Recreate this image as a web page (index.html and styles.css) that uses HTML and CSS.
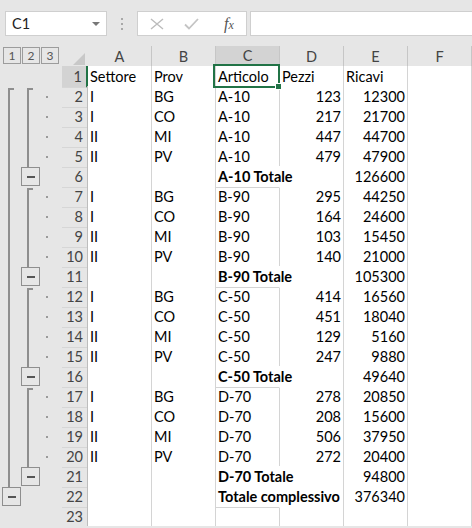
FILE: index.html
```html
<!DOCTYPE html>
<html lang="it">
<head>
  <meta charset="UTF-8">
  <title>Foglio1</title>
  <link rel="stylesheet" href="styles.css">
</head>
<body>

  <!-- barra della formula -->
  <div class="fbar">
    <div class="namebox"><span>C1</span><i class="caret"></i></div>
    <div class="grip"><i></i><i></i><i></i></div>
    <div class="fbtns">
      <svg class="btn-x" width="14" height="12" viewBox="0 0 14 12"><path d="M1 1L13 11M13 1L1 11" stroke="#bcbcbc" stroke-width="1.4" fill="none"/></svg>
      <svg class="btn-ok" width="15" height="12" viewBox="0 0 15 12"><path d="M1 6.5L5 10.5L14 1" stroke="#c4c4c4" stroke-width="1.8" fill="none"/></svg>
      <span class="fx">f<small>x</small></span>
    </div>
    <div class="finput"></div>
  </div>

  <!-- foglio -->
  <div class="sheet">
    <div class="row head">
      <div class="levels"><span>1</span><span>2</span><span>3</span></div>
      <div class="corner"><i></i></div>
      <div class="ch">A</div>
      <div class="ch">B</div>
      <div class="ch sel">C</div>
      <div class="ch">D</div>
      <div class="ch">E</div>
      <div class="ch">F</div>
    </div>

    <div class="row">
      <i class="o1"></i><i class="o2"></i><i class="od"></i>
      <div class="rh sel">1</div>
      <div class="c">Settore</div><div class="c">Prov</div><div class="c cur">Articolo</div><div class="c">Pezzi</div><div class="c">Ricavi</div><div class="c"></div>
    </div>

    <!-- A-10 -->
    <div class="row">
      <i class="o1 start"></i><i class="o2 start"></i><i class="od dot"></i>
      <div class="rh">2</div>
      <div class="c">I</div><div class="c">BG</div><div class="c">A-10</div><div class="c num">123</div><div class="c num">12300</div><div class="c"></div>
    </div>
    <div class="row">
      <i class="o1 line"></i><i class="o2 line"></i><i class="od dot"></i>
      <div class="rh">3</div>
      <div class="c">I</div><div class="c">CO</div><div class="c">A-10</div><div class="c num">217</div><div class="c num">21700</div><div class="c"></div>
    </div>
    <div class="row">
      <i class="o1 line"></i><i class="o2 line"></i><i class="od dot"></i>
      <div class="rh">4</div>
      <div class="c">II</div><div class="c">MI</div><div class="c">A-10</div><div class="c num">447</div><div class="c num">44700</div><div class="c"></div>
    </div>
    <div class="row">
      <i class="o1 line"></i><i class="o2 line"></i><i class="od dot"></i>
      <div class="rh">5</div>
      <div class="c">II</div><div class="c">PV</div><div class="c">A-10</div><div class="c num">479</div><div class="c num">47900</div><div class="c"></div>
    </div>
    <div class="row">
      <i class="o1 line"></i><i class="o2 box"></i><i class="od"></i>
      <div class="rh">6</div>
      <div class="c"></div><div class="c"></div><div class="c b spill">A-10 Totale</div><div class="c"></div><div class="c num">126600</div><div class="c"></div>
    </div>

    <!-- B-90 -->
    <div class="row">
      <i class="o1 line"></i><i class="o2 start"></i><i class="od dot"></i>
      <div class="rh">7</div>
      <div class="c">I</div><div class="c">BG</div><div class="c">B-90</div><div class="c num">295</div><div class="c num">44250</div><div class="c"></div>
    </div>
    <div class="row">
      <i class="o1 line"></i><i class="o2 line"></i><i class="od dot"></i>
      <div class="rh">8</div>
      <div class="c">I</div><div class="c">CO</div><div class="c">B-90</div><div class="c num">164</div><div class="c num">24600</div><div class="c"></div>
    </div>
    <div class="row">
      <i class="o1 line"></i><i class="o2 line"></i><i class="od dot"></i>
      <div class="rh">9</div>
      <div class="c">II</div><div class="c">MI</div><div class="c">B-90</div><div class="c num">103</div><div class="c num">15450</div><div class="c"></div>
    </div>
    <div class="row">
      <i class="o1 line"></i><i class="o2 line"></i><i class="od dot"></i>
      <div class="rh">10</div>
      <div class="c">II</div><div class="c">PV</div><div class="c">B-90</div><div class="c num">140</div><div class="c num">21000</div><div class="c"></div>
    </div>
    <div class="row">
      <i class="o1 line"></i><i class="o2 box"></i><i class="od"></i>
      <div class="rh">11</div>
      <div class="c"></div><div class="c"></div><div class="c b spill">B-90 Totale</div><div class="c"></div><div class="c num">105300</div><div class="c"></div>
    </div>

    <!-- C-50 -->
    <div class="row">
      <i class="o1 line"></i><i class="o2 start"></i><i class="od dot"></i>
      <div class="rh">12</div>
      <div class="c">I</div><div class="c">BG</div><div class="c">C-50</div><div class="c num">414</div><div class="c num">16560</div><div class="c"></div>
    </div>
    <div class="row">
      <i class="o1 line"></i><i class="o2 line"></i><i class="od dot"></i>
      <div class="rh">13</div>
      <div class="c">I</div><div class="c">CO</div><div class="c">C-50</div><div class="c num">451</div><div class="c num">18040</div><div class="c"></div>
    </div>
    <div class="row">
      <i class="o1 line"></i><i class="o2 line"></i><i class="od dot"></i>
      <div class="rh">14</div>
      <div class="c">II</div><div class="c">MI</div><div class="c">C-50</div><div class="c num">129</div><div class="c num">5160</div><div class="c"></div>
    </div>
    <div class="row">
      <i class="o1 line"></i><i class="o2 line"></i><i class="od dot"></i>
      <div class="rh">15</div>
      <div class="c">II</div><div class="c">PV</div><div class="c">C-50</div><div class="c num">247</div><div class="c num">9880</div><div class="c"></div>
    </div>
    <div class="row">
      <i class="o1 line"></i><i class="o2 box"></i><i class="od"></i>
      <div class="rh">16</div>
      <div class="c"></div><div class="c"></div><div class="c b spill">C-50 Totale</div><div class="c"></div><div class="c num">49640</div><div class="c"></div>
    </div>

    <!-- D-70 -->
    <div class="row">
      <i class="o1 line"></i><i class="o2 start"></i><i class="od dot"></i>
      <div class="rh">17</div>
      <div class="c">I</div><div class="c">BG</div><div class="c">D-70</div><div class="c num">278</div><div class="c num">20850</div><div class="c"></div>
    </div>
    <div class="row">
      <i class="o1 line"></i><i class="o2 line"></i><i class="od dot"></i>
      <div class="rh">18</div>
      <div class="c">I</div><div class="c">CO</div><div class="c">D-70</div><div class="c num">208</div><div class="c num">15600</div><div class="c"></div>
    </div>
    <div class="row">
      <i class="o1 line"></i><i class="o2 line"></i><i class="od dot"></i>
      <div class="rh">19</div>
      <div class="c">II</div><div class="c">MI</div><div class="c">D-70</div><div class="c num">506</div><div class="c num">37950</div><div class="c"></div>
    </div>
    <div class="row">
      <i class="o1 line"></i><i class="o2 line"></i><i class="od dot"></i>
      <div class="rh">20</div>
      <div class="c">II</div><div class="c">PV</div><div class="c">D-70</div><div class="c num">272</div><div class="c num">20400</div><div class="c"></div>
    </div>
    <div class="row">
      <i class="o1 line"></i><i class="o2 box"></i><i class="od"></i>
      <div class="rh">21</div>
      <div class="c"></div><div class="c"></div><div class="c b spill">D-70 Totale</div><div class="c"></div><div class="c num">94800</div><div class="c"></div>
    </div>

    <div class="row">
      <i class="o1 box"></i><i class="o2"></i><i class="od"></i>
      <div class="rh">22</div>
      <div class="c"></div><div class="c"></div><div class="c b spill">Totale complessivo</div><div class="c"></div><div class="c num">376340</div><div class="c"></div>
    </div>
    <div class="row">
      <i class="o1"></i><i class="o2"></i><i class="od"></i>
      <div class="rh">23</div>
      <div class="c"></div><div class="c"></div><div class="c"></div><div class="c"></div><div class="c"></div><div class="c"></div>
    </div>
  </div>

</body>
</html>
```

FILE: styles.css
```css
body {
  margin: 0;
  background: #e6e6e6;
  font-family: Lato, "Liberation Sans", sans-serif;
  font-size: 14.5px;
  color: #000;
}

/* Barra della formula */
.fbar {
  display: flex;
  align-items: flex-start;
  height: 46px;
  box-sizing: border-box;
  padding: 11px 0 0 5px;
}
.namebox {
  width: 102px;
  height: 25px;
  box-sizing: border-box;
  background: #fff;
  border: 1px solid #cfcfcf;
  display: flex;
  align-items: center;
  justify-content: space-between;
  padding: 0 6px 0 6px;
  color: #222;
}
.caret {
  width: 0;
  height: 0;
  border-left: 4px solid transparent;
  border-right: 4px solid transparent;
  border-top: 4px solid #777;
}
.grip {
  width: 30px;
  height: 25px;
  display: flex;
  flex-direction: column;
  align-items: center;
  justify-content: center;
  gap: 3px;
}
.grip i {
  width: 2px;
  height: 2px;
  background: #a8a8a8;
}
.fbtns {
  width: 110px;
  height: 25px;
  box-sizing: border-box;
  background: #fff;
  border: 1px solid #cfcfcf;
  display: flex;
  align-items: center;
  padding-left: 12px;
}
.btn-ok { margin-left: 20px; }
.fx {
  margin-left: 25px;
  font-family: "Liberation Serif", serif;
  font-style: italic;
  font-size: 16px;
  color: #555;
}
.fx small { font-size: 12px; }
.finput {
  flex: 1;
  height: 25px;
  box-sizing: border-box;
  margin-left: 3px;
  background: #fff;
  border: 1px solid #cfcfcf;
  border-right: none;
}

/* Griglia */
.row {
  display: grid;
  grid-template-columns: 21px 19px 22px 26px repeat(6, 64px);
  height: 20px;
}
.head .levels {
  grid-column: span 3;
  display: flex;
  gap: 1px;
  padding: 1px 0 0 3px;
}
.levels span {
  width: 18px;
  height: 17px;
  box-sizing: border-box;
  border: 1px solid #9c9c9c;
  font-size: 12px;
  line-height: 15px;
  text-align: center;
  color: #555;
}
.corner {
  display: flex;
  justify-content: flex-end;
  align-items: flex-end;
  padding: 0 3px 3px 0;
}
.corner i {
  width: 0;
  height: 0;
  border-left: 12px solid transparent;
  border-bottom: 12px solid #c8c8c8;
}
.ch {
  text-align: center;
  line-height: 21px;
  color: #444;
  border-right: 1px solid #c6c6c6;
  border-bottom: 1px solid #c6c6c6;
}
.ch.sel {
  background: #d3d3d3;
  border-bottom: 2px solid #217346;
  line-height: 20px;
}

.rh {
  text-align: right;
  padding-right: 4px;
  line-height: 21px;
  color: #444;
  border-right: 1px solid #bdbdbd;
  border-bottom: 1px solid #d6d6d6;
}
.rh.sel {
  background: #d3d3d3;
  border-right: 2px solid #217346;
}

.c {
  background: #fff;
  border-right: 1px solid #d4d4d4;
  border-bottom: 1px solid #d4d4d4;
  padding: 0 2px;
  line-height: 21px;
  white-space: nowrap;
}
.num { text-align: right; }
.b { font-weight: bold; }
.spill {
  position: relative;
  z-index: 1;
  border-right-color: #fff;
}

/* Cella attiva */
.cur {
  position: relative;
  z-index: 2;
}
.cur::after {
  content: "";
  position: absolute;
  top: -2px;
  left: -3px;
  right: -1px;
  bottom: -1px;
  border: 2px solid #217346;
}
.cur::before {
  content: "";
  position: absolute;
  right: -3px;
  bottom: -3px;
  width: 5px;
  height: 5px;
  background: #217346;
  border: 1px solid #fff;
  z-index: 1;
}

/* Struttura (raggruppamento) */
.o1.line,
.o2.line {
  background-image: linear-gradient(#8e8e8e, #8e8e8e);
  background-size: 2px 100%;
  background-repeat: no-repeat;
}
.o1.line { background-position: 8px 0; }
.o2.line { background-position: 6px 0; }

.o1.start,
.o2.start {
  background-image: linear-gradient(#8e8e8e, #8e8e8e), linear-gradient(#8e8e8e, #8e8e8e);
  background-size: 2px 18px, 6px 2px;
  background-repeat: no-repeat;
}
.o1.start { background-position: 8px 2px, 8px 2px; }
.o2.start { background-position: 6px 2px, 6px 2px; }

.box::before {
  content: "";
  display: block;
  width: 19px;
  height: 19px;
  box-sizing: border-box;
  margin-top: 1px;
  border: 1px solid #8e8e8e;
  background: linear-gradient(#555, #555) center / 8px 2px no-repeat;
}
.o1.box::before { margin-left: 2px; }

.od.dot {
  background: linear-gradient(#9a9a9a, #9a9a9a) 6px 10px / 2px 2px no-repeat;
}
```
